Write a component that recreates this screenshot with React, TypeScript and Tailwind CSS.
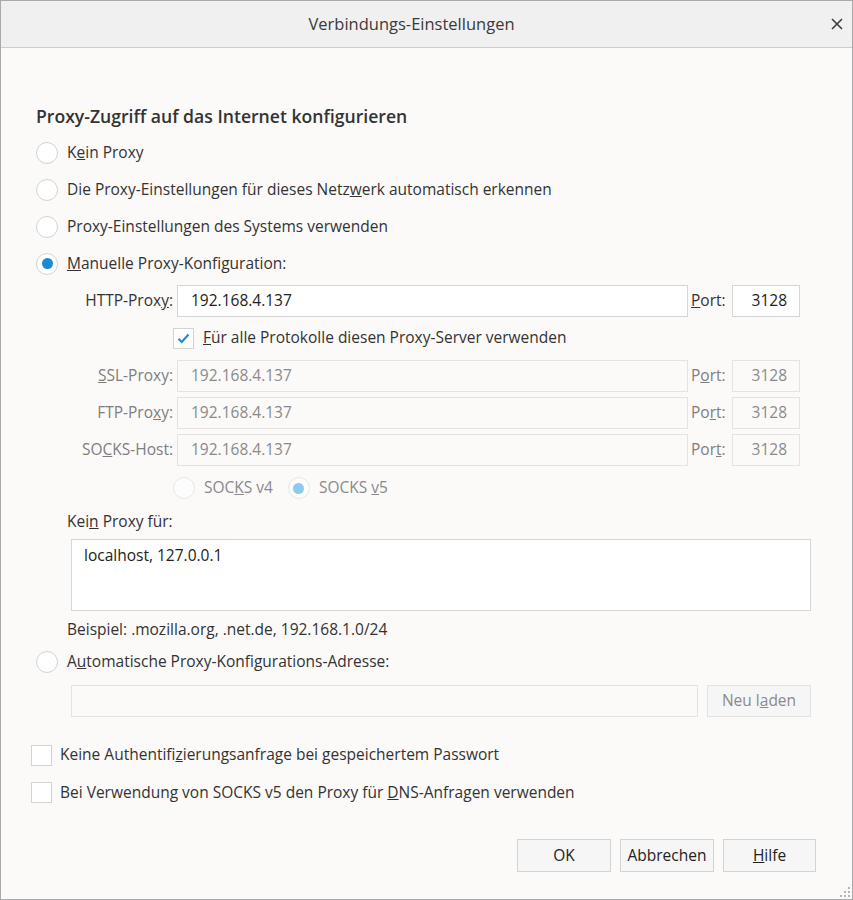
import React from "react";

const font = { fontFamily: '"Open Sans", "Noto Sans", sans-serif' };

function Radio({ checked = false, disabled = false }: { checked?: boolean; disabled?: boolean }) {
  return (
    <div
      className={`w-[22px] h-[22px] rounded-full border flex items-center justify-center shrink-0 ${
        disabled ? "border-[#e6e6e6] bg-[#fdfdfd]" : "border-[#d3d3d3] bg-white"
      }`}
    >
      {checked && (
        <div className={`w-[11px] h-[11px] rounded-full ${disabled ? "bg-[#8ccaf0]" : "bg-[#1a8ad6]"}`} />
      )}
    </div>
  );
}

function Checkbox({ checked = false }: { checked?: boolean }) {
  return (
    <div className="w-[21px] h-[21px] border border-[#d3d3d3] bg-white flex items-center justify-center shrink-0">
      {checked && (
        <svg width="13" height="11" viewBox="0 0 13 11">
          <path d="M1.5 5.8 L4.8 9 L11.5 1.5" fill="none" stroke="#1a8ad6" strokeWidth="2" />
        </svg>
      )}
    </div>
  );
}

function ProxyRow({
  label,
  value,
  disabled,
  portLabel,
}: {
  label: React.ReactNode;
  value: string;
  disabled?: boolean;
  portLabel: React.ReactNode;
}) {
  const txt = disabled ? "text-[#8a8a8a]" : "text-[#222]";
  const box = disabled ? "bg-[#fbfaf9] border-[#e4e3e2]" : "bg-white border-[#d6d6d6]";
  return (
    <div className="h-[37px] flex items-center">
      <div className={`w-[173px] pr-[1px] text-right ${disabled ? "text-[#7e7e7e]" : "text-[#333]"}`}>{label}</div>
      <div className={`ml-[3px] w-[511px] h-[32px] border ${box} flex items-center pl-[13px] ${txt}`}>{value}</div>
      <div className={`ml-[3px] w-[41px] ${disabled ? "text-[#7e7e7e]" : "text-[#333]"}`}>{portLabel}</div>
      <div className={`w-[68px] h-[32px] border ${box} flex items-center justify-end pr-[12px] ${txt}`}>3128</div>
    </div>
  );
}

export default function App() {
  return (
    <div
      className="w-[853px] h-[900px] border border-[#a9a9a9] bg-[#fbfaf9] flex flex-col relative text-[15.5px] text-[#333] overflow-hidden"
      style={font}
    >
      {/* Title bar */}
      <div className="h-[47px] shrink-0 bg-[#f0f0f0] border-b border-[#cdcdcd] flex items-center justify-center pr-[30px] relative">
        <span className="text-[16.5px] text-[#3a3a3a]">Verbindungs-Einstellungen</span>
        <svg className="absolute right-[9px] top-[17px]" width="12" height="12" viewBox="0 0 12 12">
          <path d="M1 1 L11 11 M11 1 L1 11" stroke="#3c3c3c" strokeWidth="1.6" />
        </svg>
      </div>

      {/* Body */}
      <div className="flex flex-col pt-[50px]">
        <div className="h-[36px] flex items-center pl-[35px] text-[17.6px] font-semibold text-[#333]">
          Proxy-Zugriff auf das Internet konfigurieren
        </div>

        {[
          <>K<u>e</u>in Proxy</>,
          <>Die Proxy-Einstellungen für dieses Netz<u>w</u>erk automatisch erkennen</>,
          <>Proxy-Einstellun<u>g</u>en des Systems verwenden</>,
          <><u>M</u>anuelle Proxy-Konfiguration:</>,
        ].map((l, i) => (
          <div key={i} className="h-[37px] flex items-center pl-[35px] gap-[9px]">
            <Radio checked={i === 3} />
            <span>{l}</span>
          </div>
        ))}

        <ProxyRow label={<>HTTP-Prox<u>y</u>:</>} value="192.168.4.137" portLabel={<><u>P</u>ort:</>} />

        <div className="h-[38px] flex items-center pl-[172px] gap-[9px]">
          <Checkbox checked />
          <span><u>F</u>ür alle Protokolle diesen Proxy-Server verwenden</span>
        </div>

        <ProxyRow disabled label={<><u>S</u>SL-Proxy:</>} value="192.168.4.137" portLabel={<>P<u>o</u>rt:</>} />
        <ProxyRow disabled label={<>FTP-Pro<u>x</u>y:</>} value="192.168.4.137" portLabel={<>Po<u>r</u>t:</>} />
        <ProxyRow disabled label={<>SO<u>C</u>KS-Host:</>} value="192.168.4.137" portLabel={<>Por<u>t</u>:</>} />

        <div className="h-[40px] flex items-center pl-[172px] text-[#8a8a8a]">
          <Radio disabled />
          <span className="ml-[9px]">SOC<u>K</u>S v4</span>
          <div className="ml-[15px]">
            <Radio disabled checked />
          </div>
          <span className="ml-[9px]">SOCKS <u>v</u>5</span>
        </div>

        <div className="h-[28px] flex items-center pl-[66px]">
          <span>Kei<u>n</u>{" "}Proxy für:</span>
        </div>
        <div className="ml-[70px] mt-[3px] w-[740px] h-[72px] border border-[#d6d6d6] bg-white pl-[12px] pt-[4px] text-[#222]">
          localhost, 127.0.0.1
        </div>
        <div className="h-[37px] flex items-center pl-[66px]">Beispiel: .mozilla.org, .net.de, 192.168.1.0/24</div>

        <div className="h-[27px] flex items-center pl-[35px] gap-[9px]">
          <Radio />
          <span>A<u>u</u>tomatische Proxy-Konfigurations-Adresse:</span>
        </div>

        <div className="mt-[10px] flex items-center pl-[70px]">
          <div className="w-[627px] h-[32px] border border-[#e4e3e2] bg-[#fbfaf9]" />
          <div className="ml-[9px] w-[104px] h-[32px] border border-[#e4e3e2] bg-[#f6f6f6] flex items-center justify-center text-[#8a8a8a]">
            <span>Neu l<u>a</u>den</span>
          </div>
        </div>

        <div className="mt-[19px] h-[38px] flex items-center pl-[30px] gap-[8px]">
          <Checkbox />
          <span>Keine Authentifi<u>z</u>ierungsanfrage bei gespeichertem Passwort</span>
        </div>
        <div className="h-[37px] flex items-center pl-[30px] gap-[8px]">
          <Checkbox />
          <span>Bei Verwendung von SOCKS v5 den Proxy für <u>D</u>NS-Anfragen verwenden</span>
        </div>

        <div className="mt-[28px] flex justify-end pr-[36px] gap-[9px]">
          <div className="w-[94px] h-[33px] border border-[#d3d3d3] bg-[#f6f6f6] flex items-center justify-center text-[#222]">OK</div>
          <div className="w-[94px] h-[33px] border border-[#d3d3d3] bg-[#f6f6f6] flex items-center justify-center text-[#222]">Abbrechen</div>
          <div className="w-[93px] h-[33px] border border-[#d3d3d3] bg-[#f6f6f6] flex items-center justify-center text-[#222]">
            <span><u>H</u>ilfe</span>
          </div>
        </div>
      </div>

      {/* Resize grip */}
      <svg className="absolute right-[2px] bottom-[2px]" width="11" height="11" viewBox="0 0 11 11">
        {[
          [9, 1], [9, 5], [5, 5], [9, 9], [5, 9], [1, 9],
        ].map(([x, y], i) => (
          <rect key={i} x={x} y={y} width="2" height="2" fill="#b5b5b5" />
        ))}
      </svg>
    </div>
  );
}
